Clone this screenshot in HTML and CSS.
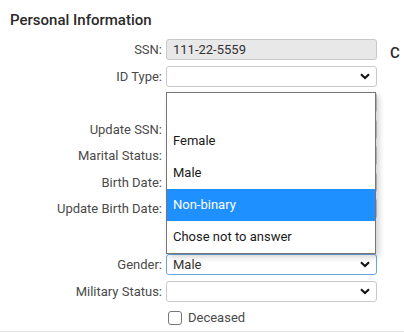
FILE: index.html
```html
<!DOCTYPE html>
<html lang="en">
<head>
    <meta charset="UTF-8">
    <meta name="viewport" content="width=device-width, initial-scale=1.0">
    <title>Personal Information</title>
    <link rel="stylesheet" href="styles.css">
</head>
<body>

    <div class="page">
        <section class="panel personal">
            <h2 class="panel-title">Personal Information</h2>

            <div class="form-grid">
                <label class="field-label">SSN:</label>
                <div class="input disabled">111-22-5559</div>

                <label class="field-label">ID Type:</label>
                <div class="input select">
                    <span></span>
                    <svg class="chevron" viewBox="0 0 10 7"><polyline points="1,1.2 5,5 9,1.2"/></svg>
                </div>

                <span class="field-label"></span>
                <div class="input"></div>

                <label class="field-label">Update SSN:</label>
                <div class="input"></div>

                <label class="field-label">Marital Status:</label>
                <div class="input"></div>

                <label class="field-label">Birth Date:</label>
                <div class="input"></div>

                <label class="field-label">Update Birth Date:</label>
                <div class="input"></div>

                <span class="field-label tall"></span>
                <div class="input tall"></div>

                <label class="field-label">Gender:</label>
                <div class="select-wrap">
                    <div class="input select focused">
                        <span>Male</span>
                        <svg class="chevron" viewBox="0 0 10 7"><polyline points="1,1.2 5,5 9,1.2"/></svg>
                    </div>

                    <!-- open option list of the Gender select -->
                    <ul class="dropdown">
                        <li class="option"></li>
                        <li class="option">Female</li>
                        <li class="option">Male</li>
                        <li class="option active">Non-binary</li>
                        <li class="option">Chose not to answer</li>
                    </ul>
                </div>

                <label class="field-label">Military Status:</label>
                <div class="input select">
                    <span></span>
                    <svg class="chevron" viewBox="0 0 10 7"><polyline points="1,1.2 5,5 9,1.2"/></svg>
                </div>

                <span class="field-label"></span>
                <label class="check">
                    <span class="box"></span>
                    Deceased
                </label>
            </div>
        </section>

        <section class="panel contact">
            <h2 class="panel-title">Contact Information</h2>
        </section>
    </div>

    <div class="divider"></div>

</body>
</html>
```

FILE: styles.css
```css
html, body {
    margin: 0;
    height: 100%;
    overflow: hidden;
}

body {
    font-family: Roboto, "Liberation Sans", sans-serif;
    background: #fff;
    color: #333;
}

.page {
    display: flex;
    height: 331px;
}

.panel-title {
    font-size: 15px;
    font-weight: 500;
    color: #2a2a2a;
    margin: 0;
    line-height: 18px;
}

.personal {
    width: 390px;
    flex-shrink: 0;
}

.personal .panel-title {
    padding: 11px 0 0 10px;
}

/* second column, only its first letter fits in the window */
.contact {
    width: 10px;
    overflow: hidden;
    white-space: nowrap;
}

.contact .panel-title {
    padding-top: 44px;
}

.form-grid {
    display: grid;
    grid-template-columns: 162px 211px;
    column-gap: 4px;
    row-gap: 5.5px;
    margin-top: 10px;
}

.field-label {
    height: 21px;
    line-height: 21px;
    text-align: right;
    font-size: 13px;
    color: #4a4a4a;
}

.input {
    box-sizing: border-box;
    height: 21px;
    border: 1px solid #c9c9c9;
    border-radius: 3px;
    background: #fff;
    padding: 0 6px;
    font-size: 13px;
    line-height: 19px;
    color: #333;
}

.tall {
    height: 24px;
}

.input.tall {
    border-color: transparent;
}

.disabled {
    background: #e8e8e8;
}

.select {
    display: flex;
    align-items: center;
    justify-content: space-between;
}

.focused {
    border-color: #6aa6e4;
}

.chevron {
    width: 10px;
    height: 7px;
    fill: none;
    stroke: #111;
    stroke-width: 2;
}

.select-wrap {
    position: relative;
}

.dropdown {
    position: absolute;
    left: 0;
    bottom: 100%;
    width: 210px;
    box-sizing: border-box;
    margin: 0;
    padding: 0;
    list-style: none;
    background: #fff;
    border: 1px solid #767676;
    box-shadow: 3px 3px 6px rgba(0, 0, 0, 0.18);
    z-index: 2;
}

.option {
    height: 32px;
    line-height: 32px;
    padding: 0 6px;
    font-size: 13px;
    color: #1a1a1a;
}

.option.active {
    background: #1e90ff;
    color: #fff;
}

.check {
    display: flex;
    align-items: center;
    height: 21px;
    font-size: 13px;
    color: #4a4a4a;
    padding-left: 2px;
}

.box {
    box-sizing: border-box;
    width: 14px;
    height: 14px;
    border: 1px solid #767676;
    border-radius: 3px;
    margin-right: 6px;
}

.divider {
    height: 1px;
    background: #e6e6e6;
}
```
